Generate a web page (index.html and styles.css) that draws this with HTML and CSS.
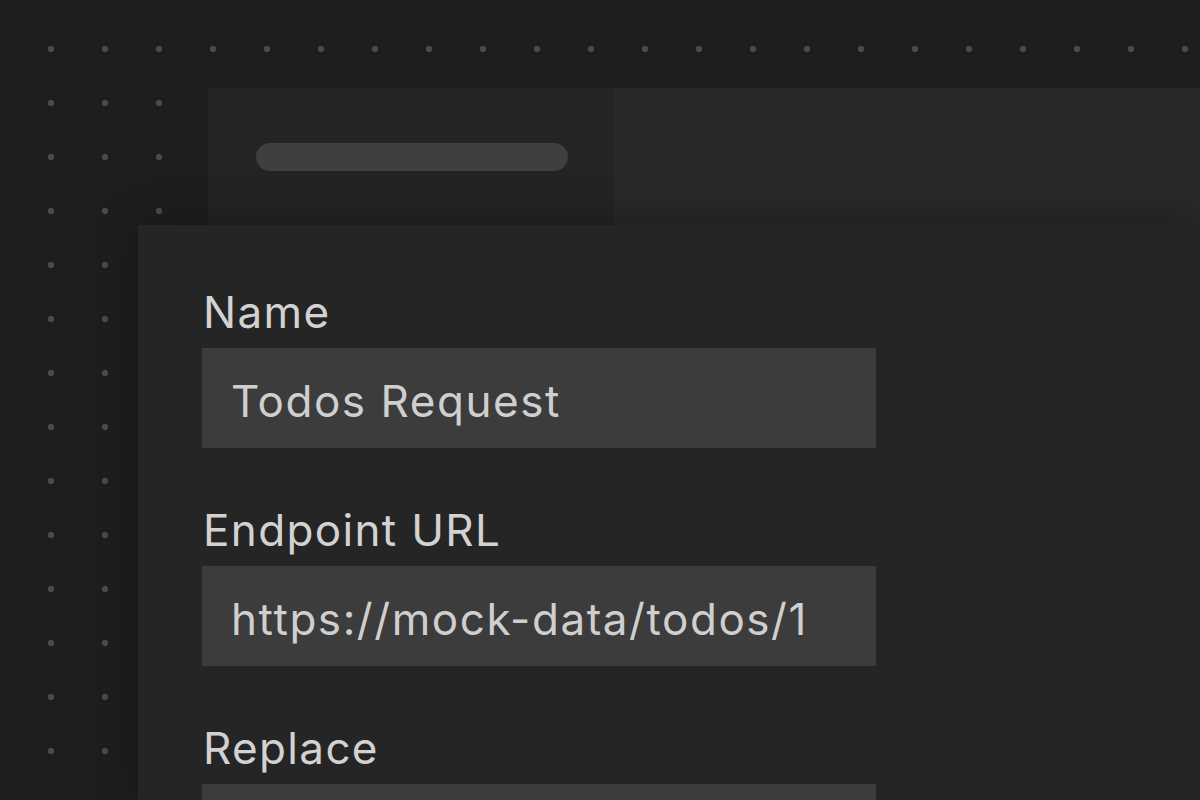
FILE: index.html
```html
<!DOCTYPE html>
<html lang="en">
<head>
<meta charset="utf-8">
<title>Request editor</title>
<link rel="stylesheet" href="styles.css">
</head>
<body>
  <div class="stage">
    <div class="back-panel">
      <div class="back-side">
        <div class="pill"></div>
      </div>
      <div class="back-main"></div>
    </div>
    <div class="front-panel">
      <div class="field">
        <div class="label">Name</div>
        <div class="input">Todos Request</div>
      </div>
      <div class="field">
        <div class="label">Endpoint URL</div>
        <div class="input">https://mock-data/todos/1</div>
      </div>
      <div class="field">
        <div class="label">Replace</div>
        <div class="input"></div>
      </div>
    </div>
  </div>
</body>
</html>
```

FILE: styles.css
```css
html, body {
  margin: 0;
  padding: 0;
  height: 100%;
  overflow: hidden;
}

body {
  background-color: #1e1e1e;
  background-image: radial-gradient(circle, #4b4b4b 0, #4b4b4b 2.8px, transparent 3.4px);
  background-size: 54px 54px;
  background-position: 24px 22px;
  font-family: Inter, "Noto Sans", "Liberation Sans", sans-serif;
}

.stage {
  height: 100vh;
  box-sizing: border-box;
  padding-top: 88px;
  display: flex;
  flex-direction: column;
  overflow: hidden;
}

.back-panel {
  margin-left: 208px;
  height: 137px;
  flex: none;
  display: flex;
}

.back-side {
  width: 406px;
  background: #242424;
  padding: 55px 0 0 48px;
  box-sizing: border-box;
}

.pill {
  width: 312px;
  height: 28px;
  border-radius: 14px;
  background: #3f3f3f;
}

.back-main {
  flex: 1;
  background: #292929;
}

.front-panel {
  flex: 1;
  min-height: 0;
  overflow: hidden;
  margin-left: 138px;
  background: #252525;
  padding: 61px 0 0 64px;
  box-shadow: 0 0 40px rgba(0, 0, 0, 0.35);
  position: relative;
  display: flex;
  flex-direction: column;
  gap: 56px;
}

.field {
  display: flex;
  flex-direction: column;
  flex: none;
}

.label {
  font-size: 44px;
  line-height: 52px;
  letter-spacing: 1.35px;
  color: #d2d2d2;
  margin-bottom: 10px;
  padding-left: 1px;
}

.input {
  width: 674px;
  height: 100px;
  box-sizing: border-box;
  background: #3c3c3c;
  color: #cfcfcf;
  font-size: 44px;
  line-height: 100px;
  letter-spacing: 1.55px;
  padding: 3px 0 0 29px;
}
```
